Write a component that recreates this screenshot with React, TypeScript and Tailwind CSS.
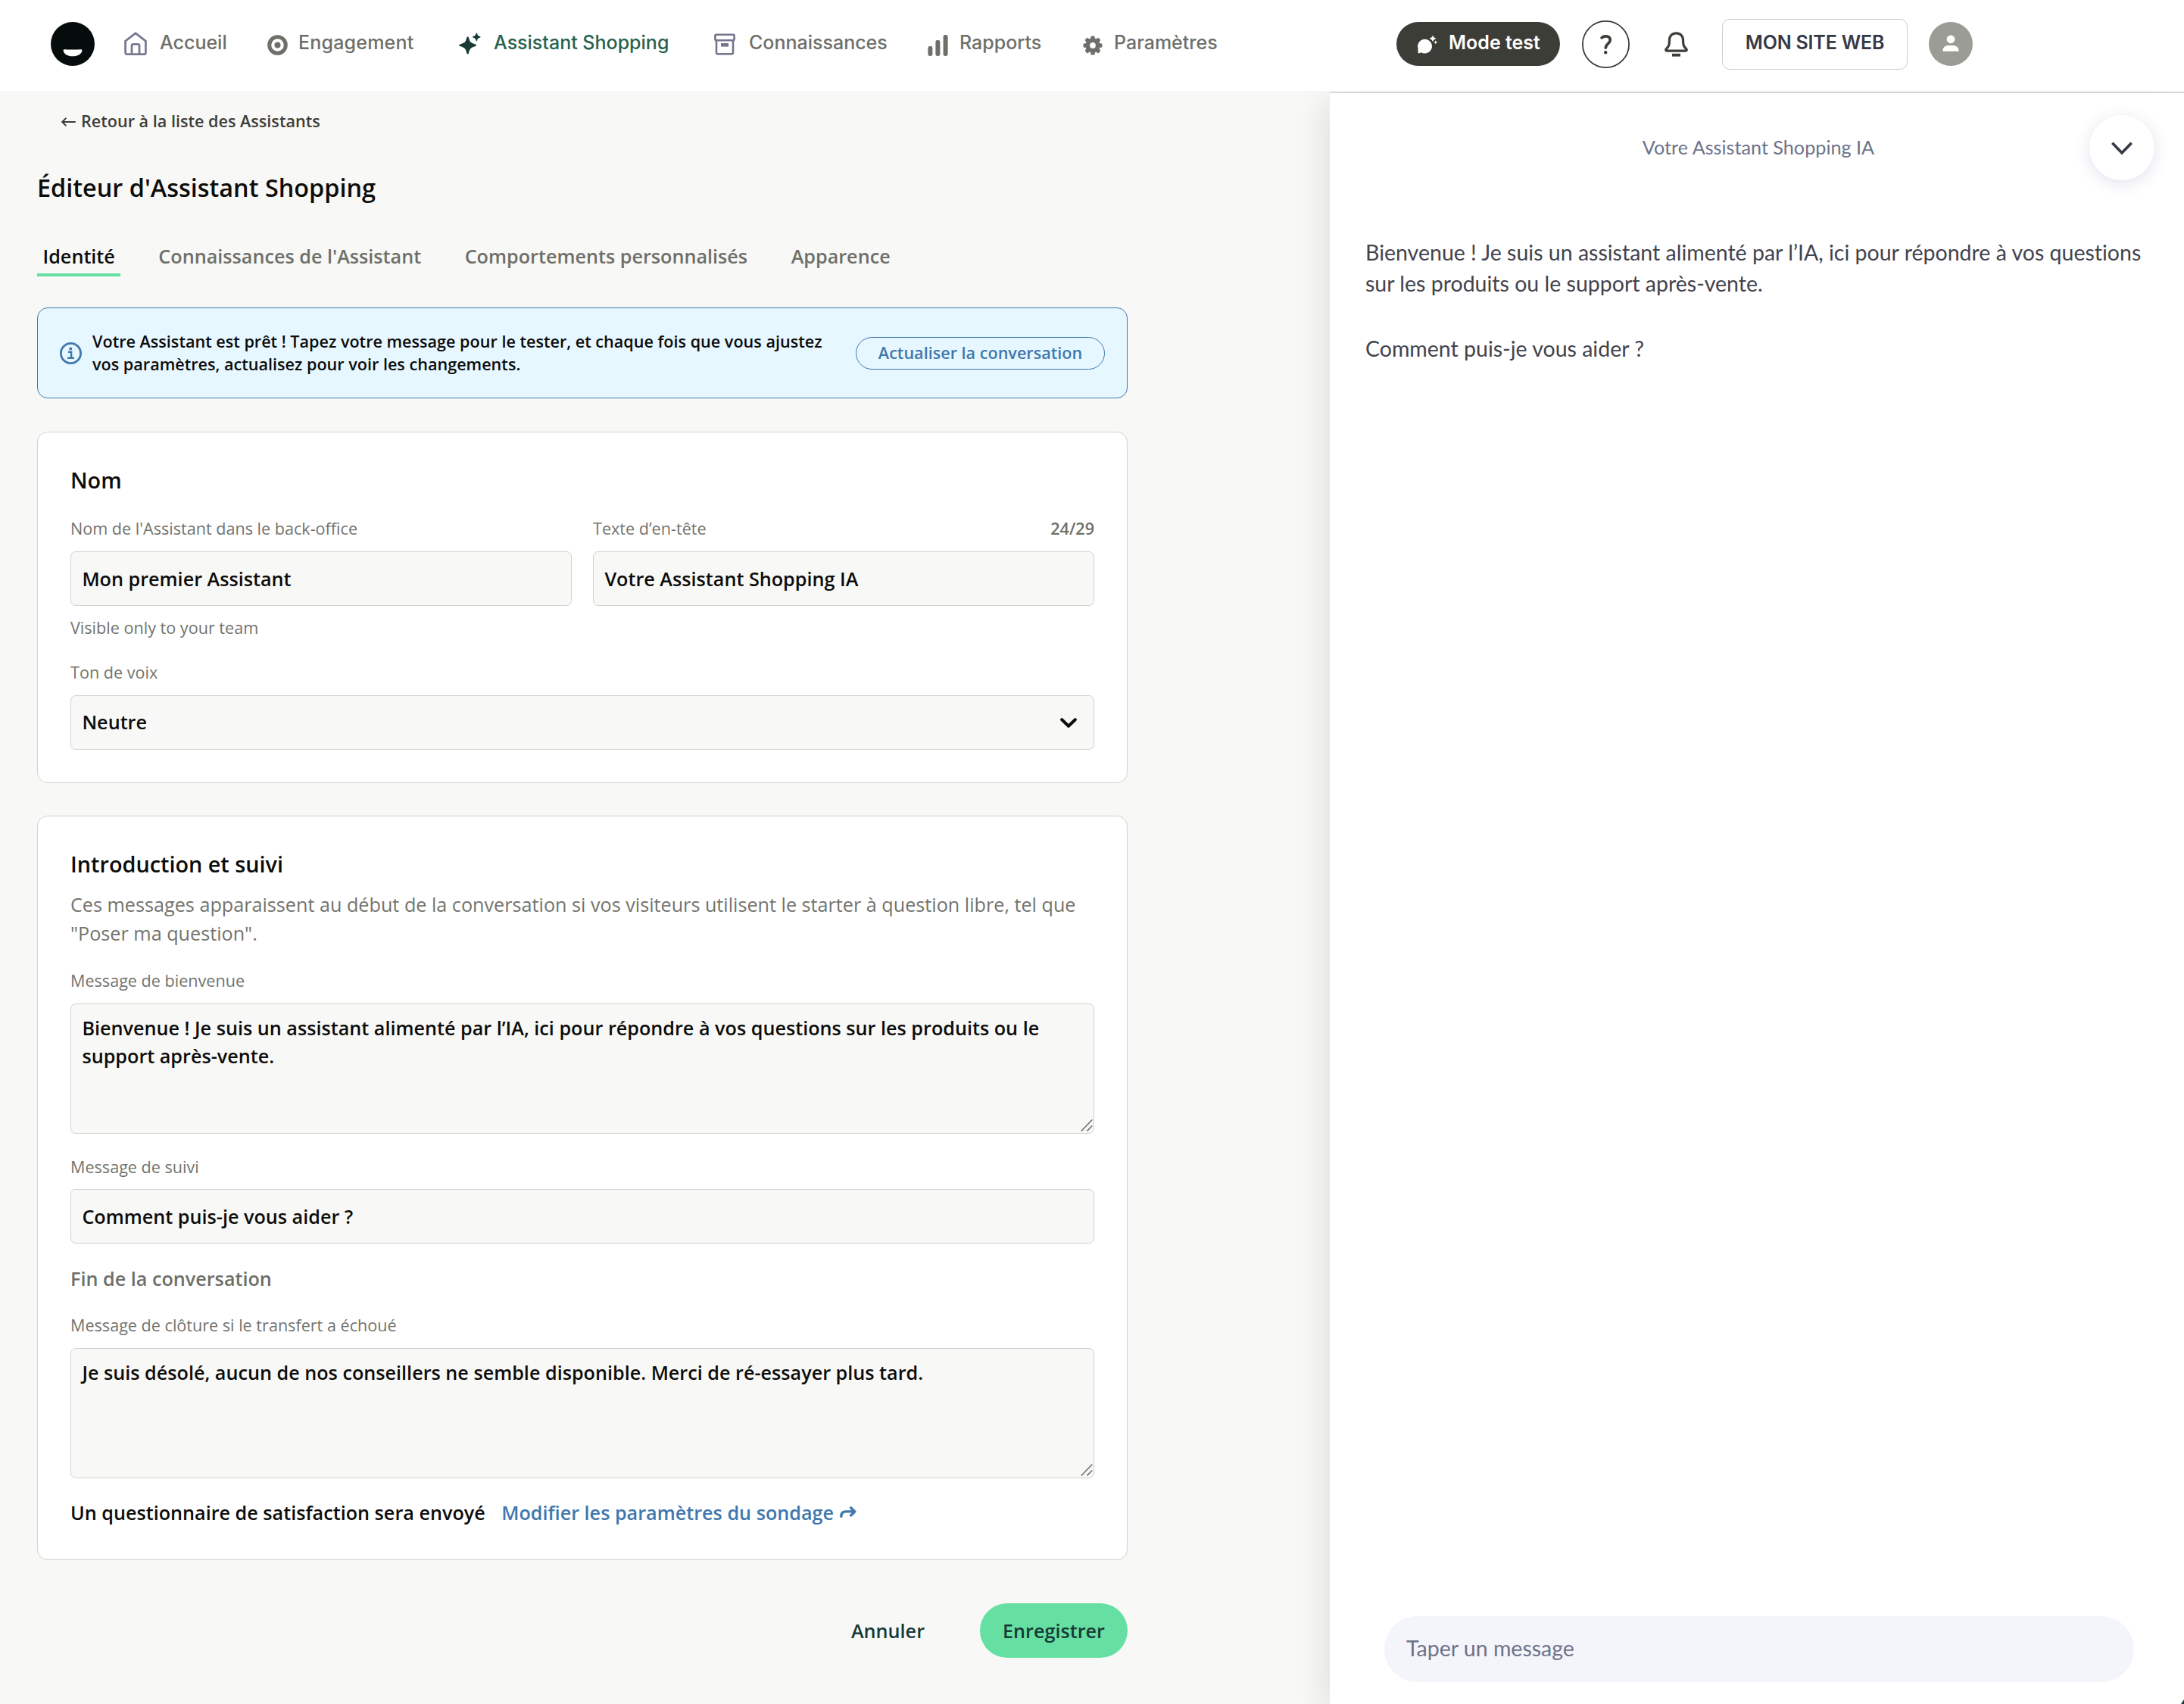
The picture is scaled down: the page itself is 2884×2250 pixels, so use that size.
import type { ReactNode } from 'react'

const navItems = [
  { label: 'Accueil', icon: <HomeIcon />, item: 'w-[189px]', slot: 'w-[47px]' },
  { label: 'Engagement', icon: <TargetIcon />, item: 'w-[252px] tracking-[0.2px]', slot: 'w-[41px]' },
  { label: 'Assistant Shopping', icon: <SparklesIcon />, item: 'w-[338px]', slot: 'w-[47px]', active: true },
  { label: 'Connaissances', icon: <ArchiveIcon />, item: 'w-[282px]', slot: 'w-[46px]' },
  { label: 'Rapports', icon: <BarsIcon />, item: 'w-[205px]', slot: 'w-[42px]' },
  { label: 'Paramètres', icon: <GearIcon />, item: 'w-[414px]', slot: 'w-[41px]' },
]

const tabs = ['Identité', "Connaissances de l'Assistant", 'Comportements personnalisés', 'Apparence']

function HomeIcon() {
  return (
    <svg width="30" height="32" viewBox="0 0 30 32" fill="none" stroke="#777b92" strokeWidth="2.8" strokeLinejoin="round">
      <path d="M1.6 12.2 15 1.8l13.4 10.4v15.3a2.2 2.2 0 0 1-2.2 2.2H3.8a2.2 2.2 0 0 1-2.2-2.2z" />
      <path d="M10 29.7V18.2a1.9 1.9 0 0 1 1.9-1.9h6.2a1.9 1.9 0 0 1 1.9 1.9v11.5" />
    </svg>
  )
}

function TargetIcon() {
  return (
    <svg className="mt-[2px]" width="27" height="27" viewBox="0 0 27 27">
      <circle cx="13.5" cy="13.5" r="10.8" fill="none" stroke="#6e6f69" strokeWidth="5" />
      <circle cx="13.5" cy="13.5" r="4" fill="#6e6f69" />
    </svg>
  )
}

function SparklesIcon() {
  return (
    <svg width="30" height="30" viewBox="0 0 30 30" fill="#173a36">
      <path d="M12.6 5.4c.8 0 1.2.5 1.4 1.3 1.3 5.4 2.3 6.8 8.7 8.8 1.9.6 1.9 2 0 2.6-6.4 2-7.4 3.4-8.7 8.8-.4 1.7-2.3 1.7-2.7 0-1.3-5.4-2.3-6.8-8.7-8.8-1.9-.6-1.900-2 0-2.6 6.4-2 7.4-3.4 8.7-8.8.2-.8.6-1.3 1.300-1.300z" />
      <path d="M24.3.4c.5 0 .7.3.8.8.6 2.3 1 2.9 3.7 3.8 1.1.4 1.1 1.2 0 1.6-2.700.9-3.100 1.500-3.700 3.800-.2 1-1.400 1-1.600 0-.6-2.300-1-2.900-3.700-3.800-1.100-.4-1.100-1.200 0-1.600 2.700-.9 3.100-1.500 3.700-3.800.1-.5.3-.8.8-.8z" />
    </svg>
  )
}

function ArchiveIcon() {
  return (
    <svg width="28" height="29" viewBox="0 0 28 29" fill="none" stroke="#72768e" strokeWidth="2.6">
      <path d="M3 9.5v16.1a1.7 1.7 0 0 0 1.7 1.7h18.6a1.7 1.7 0 0 0 1.7-1.700V9.500" />
      <rect x="1.4" y="1.7" width="25.2" height="7.6" rx="1.5" />
      <rect x="9" y="13" width="10" height="4.6" fill="#72768e" stroke="none" />
    </svg>
  )
}

function BarsIcon() {
  return (
    <svg className="mt-[3px]" width="27" height="28" viewBox="0 0 27 28" fill="#6e6f69">
      <rect x=".4" y="15" width="6" height="13" rx="2.4" />
      <rect x="10.4" y="7" width="6" height="21" rx="2.4" />
      <rect x="20.6" y="0" width="6" height="28" rx="2.4" />
    </svg>
  )
}

function GearIcon() {
  return (
    <svg className="mt-[3px]" width="26" height="26" viewBox="0 0 26 26">
      <circle cx="13" cy="13" r="6.8" fill="none" stroke="#6e6f69" strokeWidth="5.8" />
      {[0, 45, 90, 135, 180, 225, 270, 315].map((angle) => (
        <path
          key={angle}
          d="M10.300 5V2a1.500 1.500 0 0 1 1.500-1.500h2.400A1.500 1.500 0 0 1 15.700 2v3z"
          fill="#6e6f69"
          transform={`rotate(${angle} 13 13)`}
        />
      ))}
    </svg>
  )
}

function ChatSparkIcon() {
  return (
    <svg width="27" height="27" viewBox="0 0 27 27" fill="#fff">
      <path d="M9.6 6.7a9.4 9.4 0 1 1-4.8 17.5l-3.300 1.200q-.9.100-.9-.8l-.1-5.800A9.400 9.400 0 0 1 9.600 6.700z" />
      <path d="M20 0c1.4 3.9 2 4.5 6 6-4 1.400-4.600 2-6 6-1.400-4-2-4.600-6-6 4-1.500 4.600-2.100 6-6z" stroke="#3d3d37" strokeWidth="1.2" />
      <path d="M23.8 8.200c.6 1.700.9 2 2.600 2.600-1.700.6-2 .9-2.600 2.600-.6-1.700-.9-2-2.600-2.600 1.700-.6 2-.9 2.600-2.600z" />
    </svg>
  )
}

function HelpIcon() {
  return (
    <svg width="63" height="63" viewBox="0 0 63 63" fill="none" stroke="#3d3d37">
      <circle cx="31.5" cy="31.5" r="30.6" strokeWidth="1.8" />
      <path d="M26 22.800c4-3.300 11.300-2.200 11.300 3 0 4.700-6 5-6 10.500" strokeWidth="3.600" strokeLinecap="round" />
      <circle cx="31.2" cy="42.3" r="2.2" fill="#3d3d37" stroke="none" />
    </svg>
  )
}

function BellIcon() {
  return (
    <svg width="31" height="33" viewBox="0 0 31 33" fill="none" stroke="#3d3d37" strokeWidth="3.2" strokeLinejoin="round">
      <path d="M15.500 1.800c-5.500 0-9 4-9 9 0 6.200-.7 8.200-3.800 11.400-1.600 1.700-1.200 3 .8 3h24c2 0 2.400-1.300.8-3-3.100-3.200-3.800-5.200-3.800-11.400 0-5-3.500-9-9-9z" />
      <path d="M10 30.700h11" strokeWidth="3.800" />
    </svg>
  )
}

function InfoIcon() {
  return (
    <svg className="shrink-0" width="29" height="29" viewBox="0 0 29 29" fill="none" stroke="#4077ad">
      <circle cx="14.5" cy="14.5" r="13.1" strokeWidth="2.8" />
      <circle cx="14.3" cy="8.5" r="2" fill="#4077ad" stroke="none" />
      <path d="M11 12.800h4.100v7.700M10 20.700h9" strokeWidth="2.500" />
    </svg>
  )
}

function ResizeGrip() {
  return (
    <svg className="absolute bottom-[3px] right-[2px]" width="16" height="16" viewBox="0 0 16 16" stroke="#6b6b66" strokeWidth="1.5">
      <path d="M.8 15.400 15.300.6M8.400 15.400l6.900-6.900" />
    </svg>
  )
}

function TopBar() {
  return (
    <header className="flex h-[120px] shrink-0 items-center bg-white pb-1 pl-[67px] font-['Inter',sans-serif] text-[25px] font-medium">
      <svg className="mr-[39px]" width="58" height="58" viewBox="0 0 58 58">
        <circle cx="29" cy="29" r="29" fill="#060b0b" />
        <path d="M16.600 37.400Q16.600 36 18.200 36.200 29 37 39.800 36.200 41.400 36 41.400 37.400C41 42 36 45.300 29 45.300S17 42 16.600 37.400z" fill="#fff" />
      </svg>
      <nav className="flex items-center">
        {navItems.map(({ label, icon, item, slot, active }) => (
          <a key={label} className={`flex shrink-0 items-center whitespace-nowrap ${item}`}>
            <span className={`shrink-0 ${slot}`}>{icon}</span>
            <span className={active ? 'pb-[2px] text-[#27624f]' : 'pb-[2px] text-[#6e6f69]'}>{label}</span>
          </a>
        ))}
      </nav>
      <button className="flex h-[58px] w-[216px] items-center rounded-full bg-[#3d3d37] pl-[28px] font-semibold text-white">
        <ChatSparkIcon />
        <span className="pb-[2px] pl-[14px]">Mode test</span>
      </button>
      <span className="ml-[29px]">
        <HelpIcon />
      </span>
      <span className="ml-[46px]">
        <BellIcon />
      </span>
      <button className="ml-[45px] h-[67px] w-[245px] rounded-[10px] border border-[#cdcdc9] pb-[2px] font-semibold tracking-[-0.2px] text-[#363a46]">
        MON SITE WEB
      </button>
      <svg className="ml-[28px]" width="58" height="58" viewBox="0 0 58 58">
        <circle cx="29" cy="29" r="29" fill="#9b9c96" />
        <circle cx="29" cy="22.8" r="5.4" fill="#fff" />
        <path d="M18.500 38.700v-1.500a7 6.500 0 0 1 7-6.200h7a7 6.500 0 0 1 7 6.200v1.500z" fill="#fff" />
      </svg>
    </header>
  )
}

function Card({ title, className, children }: { title: string; className: string; children: ReactNode }) {
  return (
    <section className={`rounded-[14px] border border-[#d2d2ce] bg-white px-[43px] pt-[43px] ${className}`}>
      <h2 className="text-[28.8px] font-semibold leading-[40px] text-[#0c0c0b]">{title}</h2>
      {children}
    </section>
  )
}

function Label({ className, children }: { className?: string; children: ReactNode }) {
  return <div className={`text-[21.6px] leading-[30px] text-[#73736d] ${className ?? ''}`}>{children}</div>
}

function TextField({ value }: { value: string }) {
  return (
    <input
      defaultValue={value}
      className="mt-[15px] block h-[72px] w-full rounded-[7px] border border-[#d2d2ce] bg-[#f8f8f6] px-[14.4px] text-[25.2px] font-semibold text-[#0c0c0b]"
    />
  )
}

function TextArea({ value }: { value: string }) {
  return (
    <div className="relative mt-[15px] h-[172px]">
      <textarea
        defaultValue={value}
        className="block h-full w-full resize-none rounded-[7px] border border-[#d2d2ce] bg-[#f8f8f6] px-[14.4px] pt-[13px] text-[25.2px] font-semibold leading-[36.5px] text-[#0c0c0b]"
      />
      <ResizeGrip />
    </div>
  )
}

function Editor() {
  return (
    <main className="w-[1756px] shrink-0 bg-[#f8f8f6] pl-[49px]">
      <a className="ml-[32px] mt-[25px] flex items-center text-[21.6px] font-semibold leading-[30px] text-[#3d3d37]">
        <svg className="mr-[7px] mt-px" width="19" height="12" viewBox="0 0 19 12" fill="none" stroke="#3d3d37" strokeWidth="2" strokeLinecap="round">
          <path d="M18 6H1.500M5.800 1.400 1.200 6l4.600 4.600" />
        </svg>
        Retour à la liste des Assistants
      </a>
      <h1 className="mt-[50px] text-[32.4px] font-semibold leading-[44px] text-[#0c0c0b]">Éditeur d'Assistant Shopping</h1>

      <div className="mt-[51px] flex gap-[42.5px] text-[25.2px] font-semibold leading-[36px]">
        {tabs.map((tab, i) => (
          <button
            key={tab}
            className={
              i === 0
                ? 'border-b-4 border-[#66dfa3] px-[7.5px] pb-[5px] text-[#0c0c0b]'
                : 'border-b-4 border-transparent px-[7.5px] pb-[5px] text-[#6e6f69]'
            }
          >
            {tab}
          </button>
        ))}
      </div>

      <div className="w-[1440px]">
        <div className="mt-[41px] flex h-[120px] items-center rounded-[14px] border border-[#4077ad] bg-[#e7f7ff] px-[29px]">
          <InfoIcon />
          <p className="ml-[14px] w-[985px] text-[21.6px] font-semibold leading-[30px] text-[#0c0c0b]">
            Votre Assistant est prêt ! Tapez votre message pour le tester, et chaque fois que vous ajustez vos paramètres,
            actualisez pour voir les changements.
          </p>
          <button className="ml-auto h-[43px] w-[329px] rounded-full border border-[#4077ad] text-[21.6px] font-semibold leading-[30px] text-[#4077ad]">
            Actualiser la conversation
          </button>
        </div>

        <Card title="Nom" className="mt-[44px] pb-[43px]">
          <div className="mt-[29px] grid grid-cols-2 gap-[28px]">
            <div>
              <Label>Nom de l'Assistant dans le back-office</Label>
              <TextField value="Mon premier Assistant" />
              <Label className="mt-[14px]">Visible only to your team</Label>
            </div>
            <div>
              <Label className="flex justify-between">
                Texte d’en-tête
                <span className="font-semibold text-[#6e6f69]">24/29</span>
              </Label>
              <TextField value="Votre Assistant Shopping IA" />
            </div>
          </div>
          <Label className="mt-[29px]">Ton de voix</Label>
          <button className="mt-[15px] flex h-[72px] w-full items-center justify-between rounded-[7px] border border-[#d2d2ce] bg-[#f8f8f6] pl-[14.4px] pr-[22px] text-[25.2px] font-semibold text-[#0c0c0b]">
            Neutre
            <svg className="mt-px" width="22" height="13" viewBox="0 0 22 13" fill="none" stroke="#0c0c0b" strokeWidth="4" strokeLinecap="round" strokeLinejoin="round">
              <path d="M2.200 2.200 11 10.800l8.800-8.600" />
            </svg>
          </button>
        </Card>

        <Card title="Introduction et suivi" className="mt-[43px] pb-[44px]">
          <p className="mt-[14px] text-[25.2px] leading-[38px] text-[#73736d]">
            Ces messages apparaissent au début de la conversation si vos visiteurs utilisent le starter à question libre, tel
            que "Poser ma question".
          </p>
          <Label className="mt-[29px]">Message de bienvenue</Label>
          <TextArea value="Bienvenue ! Je suis un assistant alimenté par l’IA, ici pour répondre à vos questions sur les produits ou le support après-vente." />
          <Label className="-mb-px mt-[29px]">Message de suivi</Label>
          <TextField value="Comment puis-je vous aider ?" />
          <h3 className="mt-[28px] text-[25.2px] font-semibold leading-[36px] text-[#6e6f69]">Fin de la conversation</h3>
          <Label className="mt-[29px]">Message de clôture si le transfert a échoué</Label>
          <TextArea value="Je suis désolé, aucun de nos conseillers ne semble disponible. Merci de ré-essayer plus tard." />
          <div className="mt-[27px] flex items-center text-[25.2px] font-semibold leading-[36px] text-[#0c0c0b]">
            Un questionnaire de satisfaction sera envoyé
            <a className="ml-[21.5px] flex items-center text-[#4077ad]">
              Modifier les paramètres du sondage
              <svg className="ml-[8px]" width="22" height="16" viewBox="0 0 22 16" fill="none" stroke="#4077ad" strokeWidth="3.4" strokeLinecap="round" strokeLinejoin="round">
                <path d="M1.800 13.400C1.800 8.800 3.800 6.900 7.800 6.900h12M14.600 1.900l5.200 5-5.200 5" />
              </svg>
            </a>
          </div>
        </Card>

        <div className="mt-[57px] flex items-center justify-end gap-[73px] text-[25.2px] font-semibold text-[#173a36]">
          <button className="pt-px">Annuler</button>
          <button className="h-[72px] w-[195px] rounded-full bg-[#66dfa3] pt-[2px]">Enregistrer</button>
        </div>
      </div>
    </main>
  )
}

function ChatPreview() {
  return (
    <aside className="mt-[2px] flex flex-1 flex-col border-t border-[#c8c8c3] bg-white font-['Lato',sans-serif] shadow-[0_10px_44px_rgba(20,44,40,0.14)] [font-variant-ligatures:none]">
      <div className="flex h-[144px] items-center pl-[129px] pr-[39px]">
        <div className="flex-1 pb-[3px] text-center text-[25.2px] leading-[36px] text-[#6d7289]">Votre Assistant Shopping IA</div>
        <button className="flex h-[86px] w-[86px] items-center justify-center rounded-full bg-white shadow-[0_4px_20px_rgba(100,90,160,0.18)]">
          <svg className="mt-[2px]" width="28" height="18" viewBox="0 0 28 18" fill="none" stroke="#363a46" strokeWidth="3.6">
            <path d="M1.300 1.800 14 14.800 26.700 1.800" />
          </svg>
        </button>
      </div>
      <div className="flex flex-1 flex-col gap-[45px] pl-[47px] pt-[46px] text-[28.5px] leading-[41px] text-[#42434d]">
        <p>
          Bienvenue ! Je suis un assistant alimenté par l’IA, ici pour répondre à vos questions
          <br />
          sur les produits ou le support après-vente.
        </p>
        <p>Comment puis-je vous aider ?</p>
      </div>
      <div className="mb-[29px] ml-[72px] flex h-[87px] w-[990px] items-center rounded-full bg-[#f4f5fa] pl-[29px] text-[28.5px] leading-[41px] text-[#6d7289]">
        <span className="pb-[3px]">Taper un message</span>
      </div>
    </aside>
  )
}

export default function App() {
  return (
    <div className="relative flex h-[2250px] w-[2884px] flex-col overflow-hidden bg-[#f8f8f6] font-['Open_Sans',sans-serif]">
      <TopBar />
      <div className="flex flex-1 overflow-hidden">
        <Editor />
        <ChatPreview />
      </div>
      {/* corner of the floating chat launcher */}
      <svg className="absolute bottom-0 right-0" width="4" height="6" viewBox="0 0 4 6">
        <path d="M4 0v6H0z" fill="#173a36" />
      </svg>
    </div>
  )
}
